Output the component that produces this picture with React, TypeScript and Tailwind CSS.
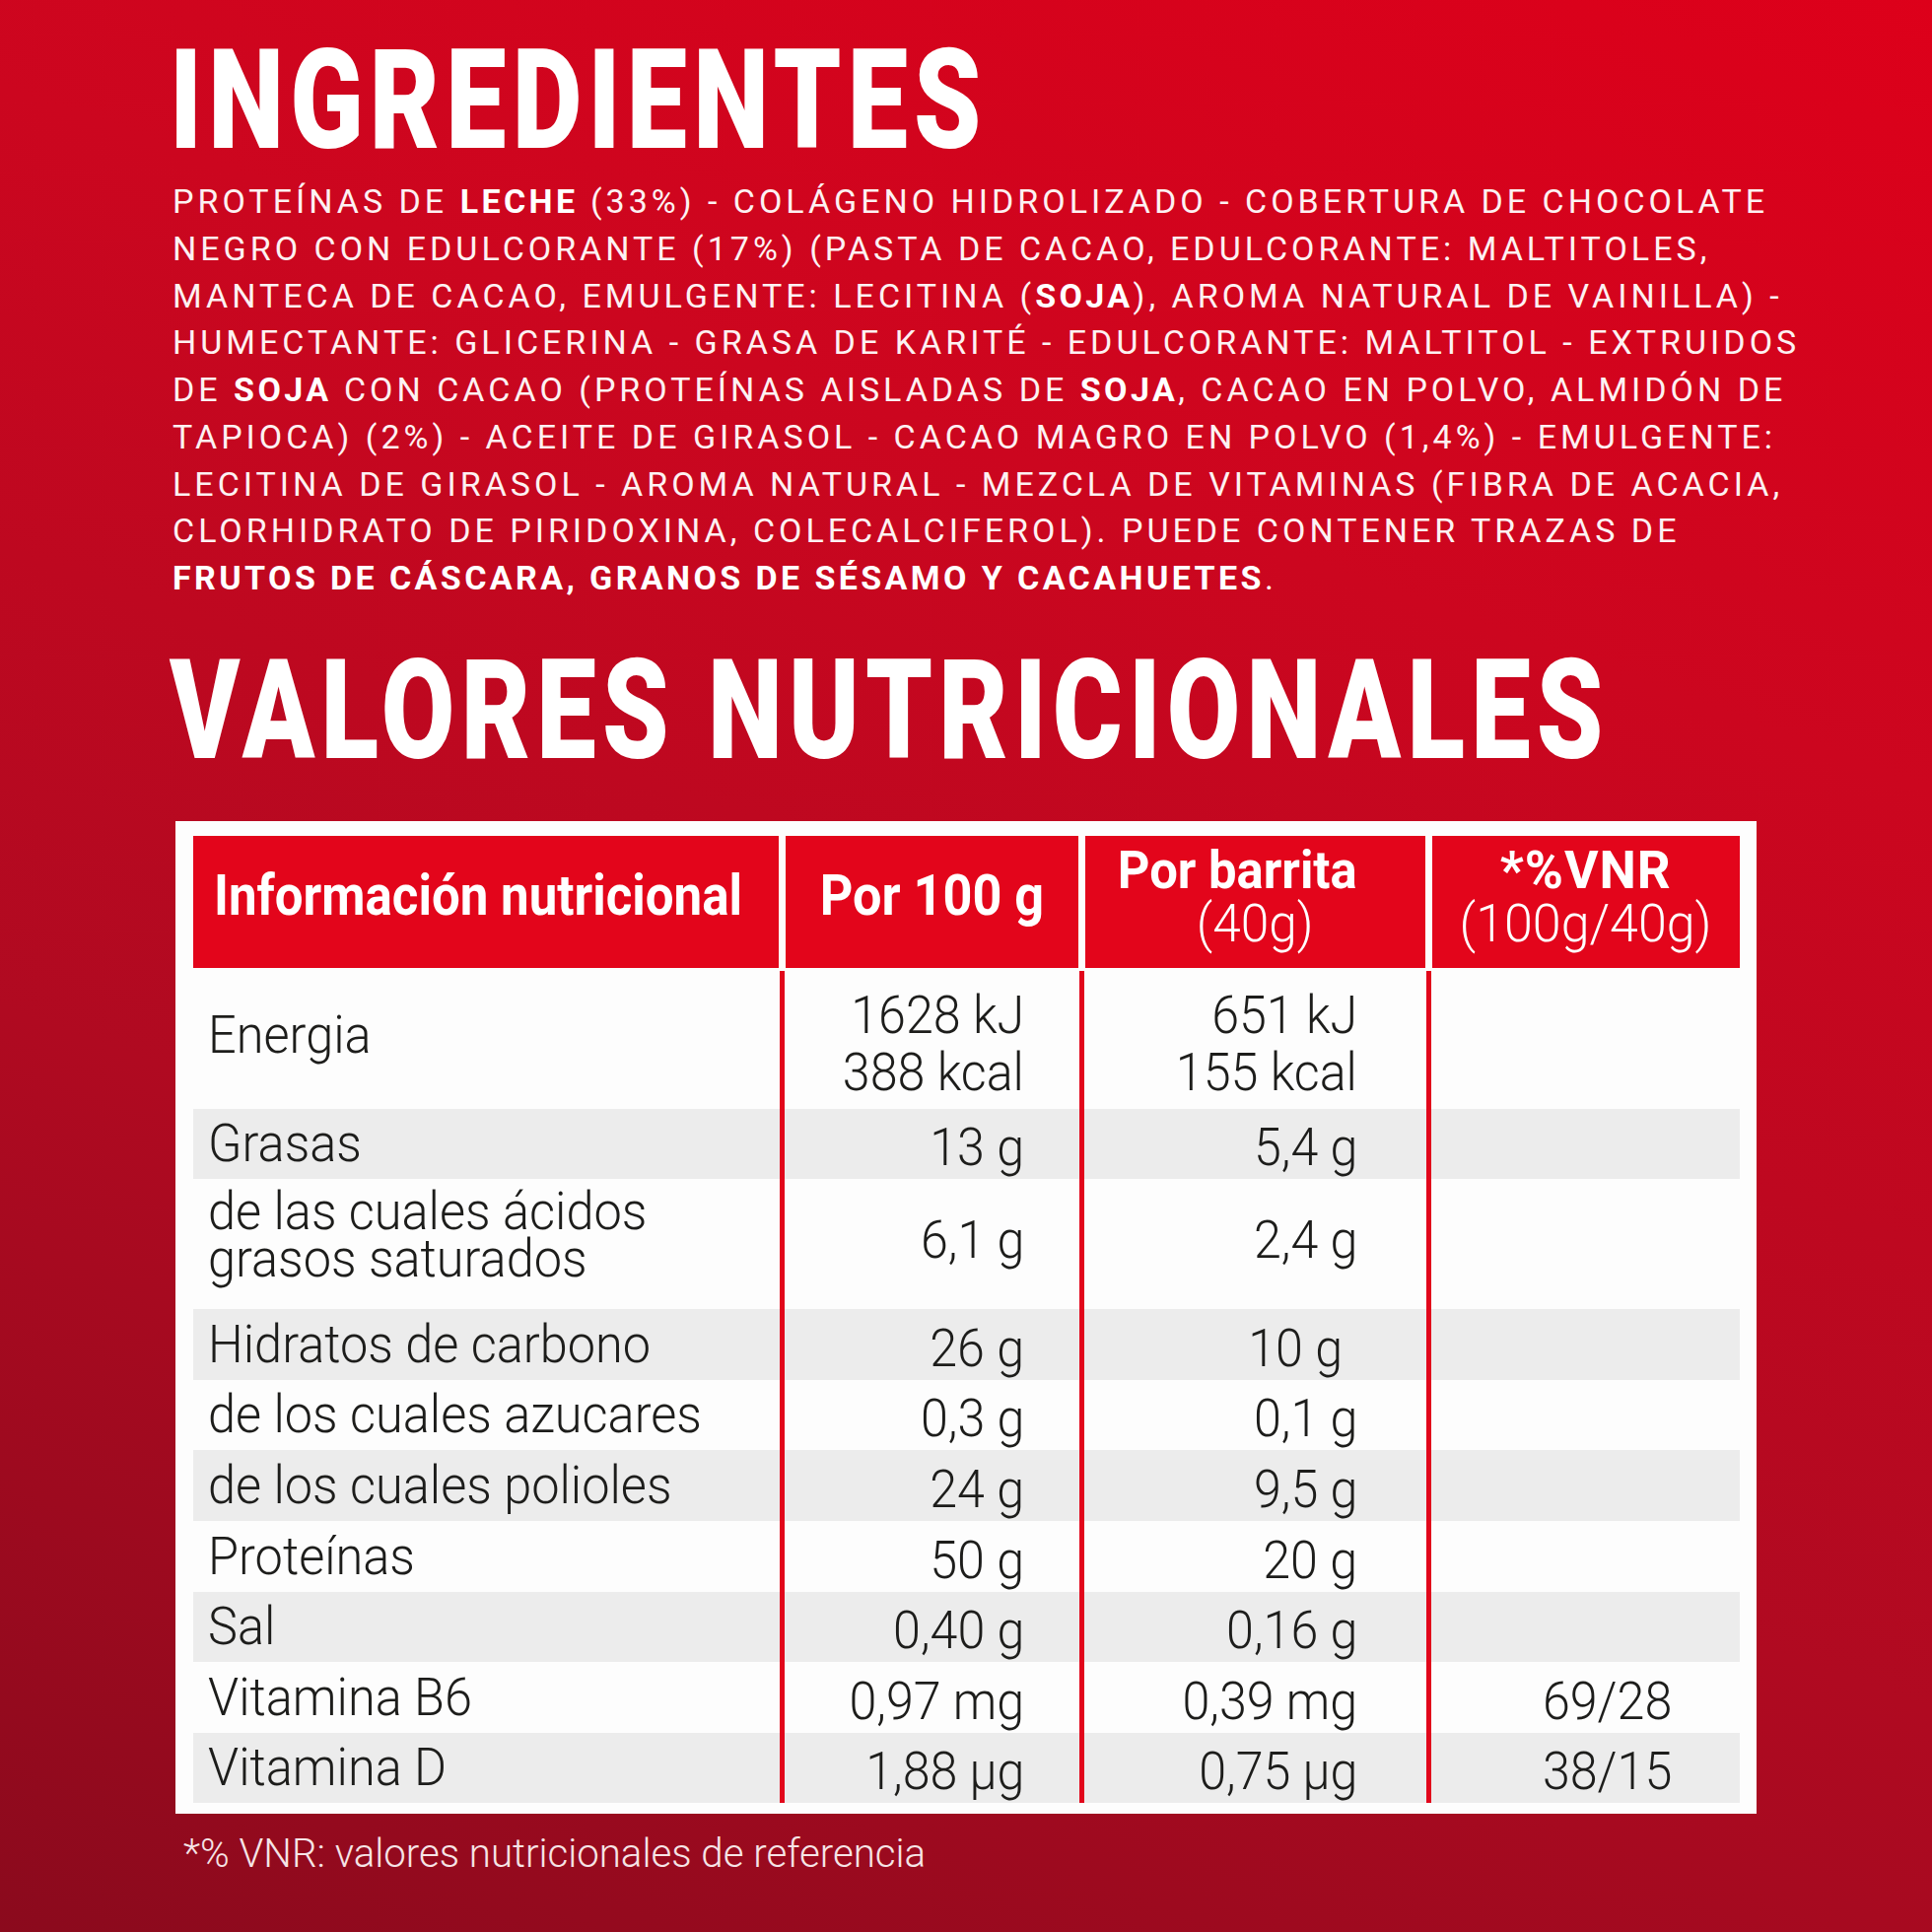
import React from "react";

type Seg = [string, boolean?];

const ingredientLines: Seg[][] = [
  [["PROTEÍNAS DE "], ["LECHE", true], [" (33%) - COLÁGENO HIDROLIZADO - COBERTURA DE CHOCOLATE"]],
  [["NEGRO CON EDULCORANTE (17%) (PASTA DE CACAO, EDULCORANTE: MALTITOLES,"]],
  [["MANTECA DE CACAO, EMULGENTE: LECITINA ("], ["SOJA", true], ["), AROMA NATURAL DE VAINILLA) -"]],
  [["HUMECTANTE: GLICERINA - GRASA DE KARITÉ - EDULCORANTE: MALTITOL - EXTRUIDOS"]],
  [["DE "], ["SOJA", true], [" CON CACAO (PROTEÍNAS AISLADAS DE "], ["SOJA", true], [", CACAO EN POLVO, ALMIDÓN DE"]],
  [["TAPIOCA) (2%) - ACEITE DE GIRASOL - CACAO MAGRO EN POLVO (1,4%) - EMULGENTE:"]],
  [["LECITINA DE GIRASOL - AROMA NATURAL - MEZCLA DE VITAMINAS (FIBRA DE ACACIA,"]],
  [["CLORHIDRATO DE PIRIDOXINA, COLECALCIFEROL). PUEDE CONTENER TRAZAS DE"]],
  [["FRUTOS DE CÁSCARA, GRANOS DE SÉSAMO Y CACAHUETES", true], ["."]],
];

type Row = {
  label: string[];
  per100: string[];
  perBar: string[];
  vnr?: string;
  h: string;
  gray?: boolean;
  barPad?: string;
  labelShift?: string;
  valueShift?: string;
};

const rows: Row[] = [
  { label: ["Energia"], per100: ["1628 kJ", "388 kcal"], perBar: ["651 kJ", "155 kcal"], h: "h-[140px]", labelShift: "pb-[10px]" },
  { label: ["Grasas"], per100: ["13 g"], perBar: ["5,4 g"], h: "h-[71px]", gray: true },
  {
    label: ["de las cuales ácidos", "grasos saturados"],
    per100: ["6,1 g"],
    perBar: ["2,4 g"],
    h: "h-[132px]",
    labelShift: "pb-[17px]",
    valueShift: "pb-[16px]",
  },
  { label: ["Hidratos de carbono"], per100: ["26 g"], perBar: ["10 g"], h: "h-[72px]", gray: true, barPad: "pr-[84px]" },
  { label: ["de los cuales azucares"], per100: ["0,3 g"], perBar: ["0,1 g"], h: "h-[71px]" },
  { label: ["de los cuales polioles"], per100: ["24 g"], perBar: ["9,5 g"], h: "h-[72px]", gray: true },
  { label: ["Proteínas"], per100: ["50 g"], perBar: ["20 g"], h: "h-[72px]" },
  { label: ["Sal"], per100: ["0,40 g"], perBar: ["0,16 g"], h: "h-[71px]", gray: true },
  { label: ["Vitamina B6"], per100: ["0,97 mg"], perBar: ["0,39 mg"], vnr: "69/28", h: "h-[72px]" },
  { label: ["Vitamina D"], per100: ["1,88 µg"], perBar: ["0,75 µg"], vnr: "38/15", h: "h-[71px]", gray: true },
];

const Divider = () => (
  <div className="w-[7px] flex justify-center">
    <div className="w-[5px] h-full bg-[#e2061b]" />
  </div>
);

const ValueCell = ({ lines, width, pad, shift }: { lines: string[]; width: string; pad: string; shift?: string }) => (
  <div className={`${width} ${pad} ${shift ?? ""} flex flex-col items-end justify-center pt-[8px]`}>
    {lines.map((l) => (
      <span key={l} className="block whitespace-nowrap origin-right scale-x-[0.93] leading-[58px]">
        {l}
      </span>
    ))}
  </div>
);

const App = () => {
  return (
    <div className="w-[1960px] h-[1960px] overflow-hidden bg-[linear-gradient(200deg,#dd001a_0%,#cc061f_30%,#b00a21_65%,#8b0a1d_100%)] font-['Roboto',sans-serif] text-white pl-[178px] flex flex-col">
      <h1 className="mt-[31px] -ml-[6px] h-[141px] text-[141px] leading-[141px] font-black tracking-[8px] whitespace-nowrap origin-left scale-x-[0.775]">
        INGREDIENTES
      </h1>

      <div className="mt-[9px] -ml-[3px] text-[#fdf1f2] text-[34px] leading-[47.75px] font-normal tracking-[4px]">
        {ingredientLines.map((line, i) => (
          <div key={i} className="whitespace-nowrap">
            {line.map(([t, b], j) => (
              <span key={j} className={b ? "font-bold text-white tracking-[3.4px]" : ""}>
                {t}
              </span>
            ))}
          </div>
        ))}
      </div>

      <h1 className="mt-[39px] -ml-[6px] h-[141px] text-[141px] leading-[141px] font-black tracking-[8px] whitespace-nowrap origin-left scale-x-[0.767]">
        VALORES NUTRICIONALES
      </h1>

      <div className="mt-[42px] w-[1604px] h-[1007px] bg-[#fdfdfd] pt-[15px] pl-[18px] text-[#1d1d1b]">
        <div className="flex gap-[7px] h-[134px] text-white">
          <div className="w-[594px] bg-[#e3051b] flex items-center pl-[21px] pb-[14px]">
            <span className="text-[58px] leading-[58px] font-bold whitespace-nowrap origin-left scale-x-[0.88]">
              Información nutricional
            </span>
          </div>
          <div className="w-[297px] bg-[#e3051b] flex items-center justify-center pb-[14px]">
            <span className="text-[58px] leading-[58px] font-bold whitespace-nowrap scale-x-[0.9]">Por 100 g</span>
          </div>
          <div className="w-[345px] bg-[#e3051b] flex flex-col items-center justify-center pb-[10px]">
            <span className="mr-[36px] text-[54px] leading-[54px] font-bold whitespace-nowrap scale-x-[0.94]">Por barrita</span>
            <span className="text-[53px] leading-[54px] font-light whitespace-nowrap scale-x-[0.97]">(40g)</span>
          </div>
          <div className="w-[312px] bg-[#e3051b] flex flex-col items-center justify-center pb-[10px]">
            <span className="text-[54px] leading-[54px] font-bold tracking-[1px] whitespace-nowrap scale-x-[0.98]">*%VNR</span>
            <span className="text-[53px] leading-[54px] font-light whitespace-nowrap scale-x-[0.98]">(100g/40g)</span>
          </div>
        </div>

        <div className="mt-[3px] w-[1569px] text-[54px] font-light">
          {rows.map((r, i) => (
            <div key={i} className={`flex ${r.h} ${r.gray ? "bg-[#ececec]" : ""}`}>
              <div className={`w-[594px] pl-[15px] flex flex-col justify-center ${r.labelShift ?? ""}`}>
                {r.label.map((l) => (
                  <span key={l} className="block whitespace-nowrap origin-left scale-x-[0.935] leading-[48px]">
                    {l}
                  </span>
                ))}
              </div>
              <Divider />
              <ValueCell lines={r.per100} width="w-[297px]" pad="pr-[55px]" shift={r.valueShift} />
              <Divider />
              <ValueCell lines={r.perBar} width="w-[345px]" pad={r.barPad ?? "pr-[69px]"} shift={r.valueShift} />
              <Divider />
              <ValueCell lines={r.vnr ? [r.vnr] : []} width="w-[312px]" pad="pr-[69px]" />
            </div>
          ))}
        </div>
      </div>

      <p className="mt-[16px] ml-[8px] text-[41px] leading-[48px] font-light text-[#f6e4e6] whitespace-nowrap origin-left scale-x-[0.98]">
        *% VNR: valores nutricionales de referencia
      </p>
    </div>
  );
};

export default App;
